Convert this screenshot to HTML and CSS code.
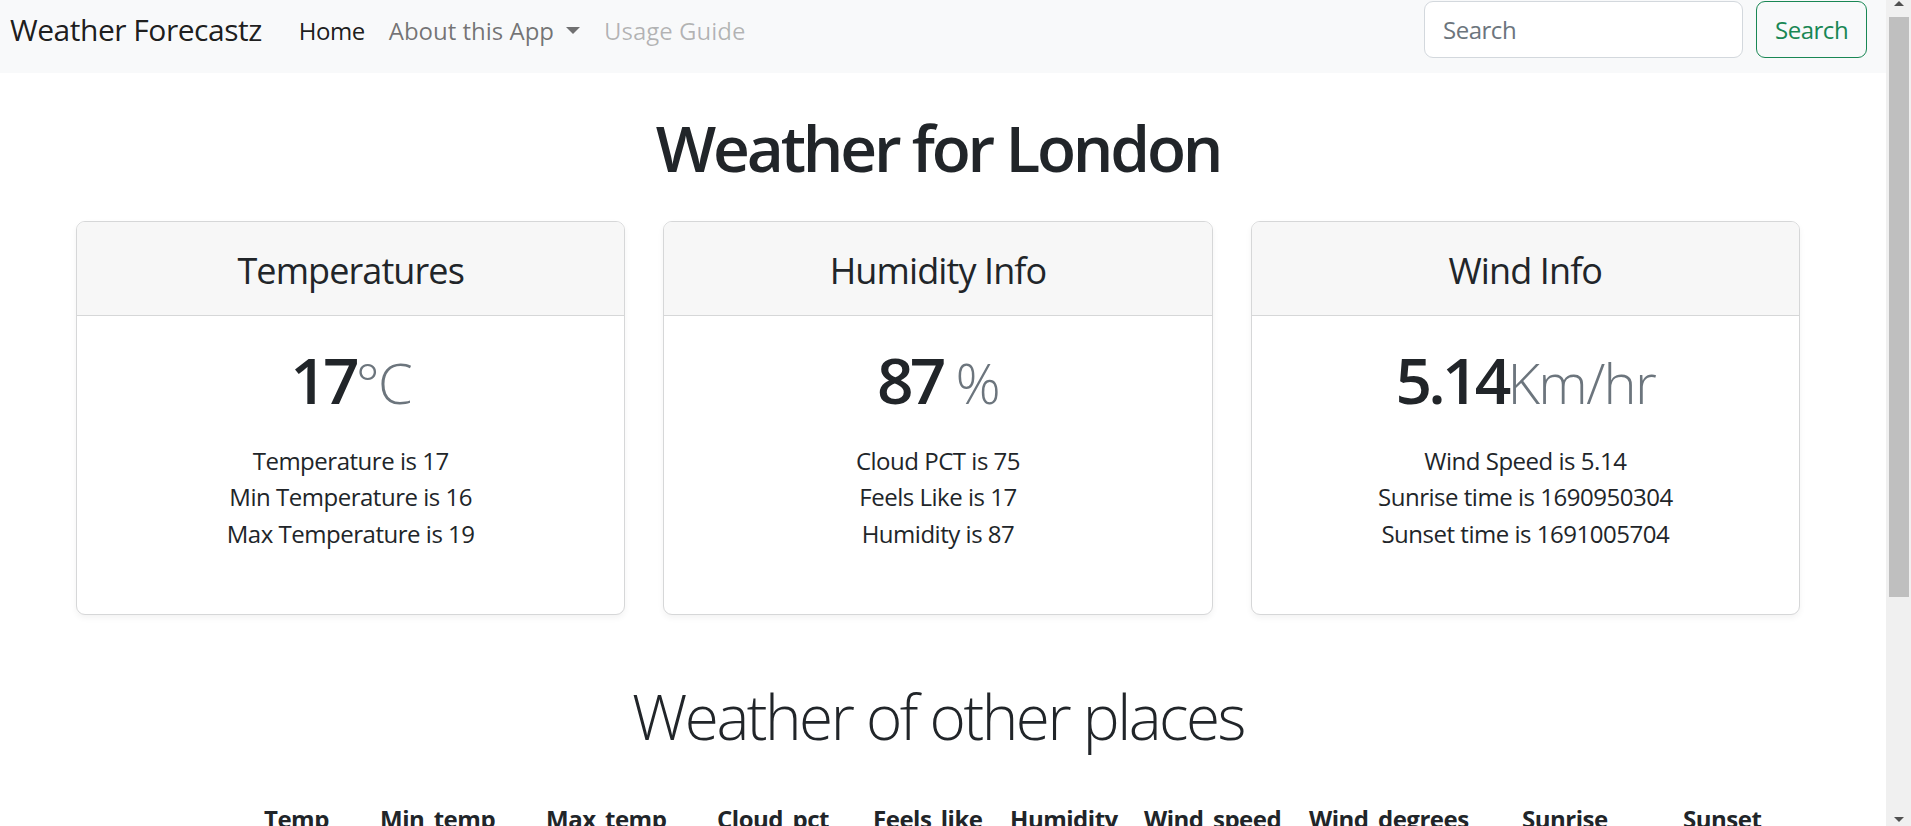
FILE: index.html
```html
<!DOCTYPE html>
<html lang="en">
<head>
<meta charset="utf-8">
<title>Weather Forecastz</title>
<link rel="stylesheet" href="styles.css">
</head>
<body>
<div class="page">
  <nav class="navbar">
    <a class="brand" href="#">Weather Forecastz</a>
    <ul class="nav">
      <li><a class="nav-link active" href="#">Home</a></li>
      <li><a class="nav-link dropdown" href="#">About this App</a></li>
      <li><a class="nav-link disabled" href="#">Usage Guide</a></li>
    </ul>
    <form class="search">
      <input class="search-input" type="search" placeholder="Search">
      <button class="search-btn" type="button">Search</button>
    </form>
  </nav>

  <main class="container">
    <h1 class="title">Weather for London</h1>

    <div class="cards">
      <div class="card">
        <div class="card-header"><h4 class="card-title">Temperatures</h4></div>
        <div class="card-body">
          <h1 class="value">17<small class="unit">°C</small></h1>
          <ul class="facts">
            <li>Temperature is 17</li>
            <li>Min Temperature is 16</li>
            <li>Max Temperature is 19</li>
          </ul>
        </div>
      </div>
      <div class="card">
        <div class="card-header"><h4 class="card-title">Humidity Info</h4></div>
        <div class="card-body">
          <h1 class="value">87 <small class="unit">%</small></h1>
          <ul class="facts">
            <li>Cloud PCT is 75</li>
            <li>Feels Like is 17</li>
            <li>Humidity is 87</li>
          </ul>
        </div>
      </div>
      <div class="card">
        <div class="card-header"><h4 class="card-title">Wind Info</h4></div>
        <div class="card-body">
          <h1 class="value">5.14<small class="unit">Km/hr</small></h1>
          <ul class="facts">
            <li>Wind Speed is 5.14</li>
            <li>Sunrise time is 1690950304</li>
            <li>Sunset time is 1691005704</li>
          </ul>
        </div>
      </div>
    </div>

    <h2 class="subtitle">Weather of other places</h2>

    <table class="places">
      <thead>
        <tr>
          <th class="c-city"></th>
          <th class="c-temp">Temp</th>
          <th class="c-min">Min_temp</th>
          <th class="c-max">Max_temp</th>
          <th class="c-cloud">Cloud_pct</th>
          <th class="c-feels">Feels_like</th>
          <th class="c-hum">Humidity</th>
          <th class="c-ws">Wind_speed</th>
          <th class="c-wd">Wind_degrees</th>
          <th class="c-rise">Sunrise</th>
          <th class="c-set">Sunset</th>
        </tr>
      </thead>
      <tbody>
        <tr>
          <td>Shanghai</td><td>28</td><td>27</td><td>30</td><td>40</td><td>31</td><td>74</td><td>4.2</td><td>120</td><td>1690924450</td><td>1690973740</td>
        </tr>
      </tbody>
    </table>
  </main>
</div>

<div class="scrollbar">
  <div class="sb-arrow sb-up"></div>
  <div class="sb-track"><div class="sb-thumb"></div></div>
  <div class="sb-arrow sb-down"></div>
</div>
</body>
</html>
```

FILE: styles.css
```css
html, body {
  margin: 0;
  padding: 0;
  overflow: hidden;
  height: 100%;
}

body {
  display: flex;
  align-items: flex-start;
  font-family: "Open Sans", "Noto Sans", sans-serif;
  font-size: 24px;
  line-height: 1.5;
  color: #212529;
  letter-spacing: -0.02em;
  background: #fff;
}

.page {
  flex: 1;
  min-width: 0;
  padding-right: 10px;
}

/* Navbar */
.navbar {
  display: flex;
  align-items: center;
  height: 57px;
  padding: 1px 19px 15px 10px;
  margin-right: -10px;
  background: #f8f9fa;
}

.brand {
  font-size: 30px;
  line-height: 45px;
  color: rgba(0, 0, 0, 0.9);
  text-decoration: none;
  margin-right: 25px;
}

.nav {
  display: flex;
  list-style: none;
  margin: 0;
  padding: 0;
}

.nav-link {
  display: block;
  padding: 2px 12px 0;
  line-height: 36px;
  text-decoration: none;
  letter-spacing: 0;
  color: rgba(0, 0, 0, 0.55);
}

.nav-link.active { color: rgba(0, 0, 0, 0.9); letter-spacing: -0.02em; }
.nav-link.disabled { color: rgba(0, 0, 0, 0.28); }

.nav-link.dropdown::after {
  content: "";
  display: inline-block;
  margin-left: 12px;
  vertical-align: 6px;
  border-top: 7px solid rgba(0, 0, 0, 0.55);
  border-left: 7px solid transparent;
  border-right: 7px solid transparent;
}

.search {
  display: flex;
  gap: 13px;
  margin-left: auto;
}

.search-input {
  box-sizing: border-box;
  width: 319px;
  height: 57px;
  padding: 9px 18px;
  border: 1px solid #d3d8dd;
  border-radius: 9px;
  font: inherit;
  letter-spacing: inherit;
  color: #212529;
  background: #fff;
  outline: none;
}

.search-input::placeholder { color: #6c757d; }

.search-btn {
  box-sizing: border-box;
  width: 111px;
  height: 57px;
  padding: 9px 18px;
  border: 1px solid #198754;
  border-radius: 9px;
  background: transparent;
  color: #198754;
  font: inherit;
  letter-spacing: inherit;
}

/* Main */
.container {
  width: 1724px;
  margin: 0 auto;
}

.title {
  margin: 37px 0 34px;
  text-align: center;
  font-size: 64px;
  line-height: 1.2;
  font-weight: 600;
  letter-spacing: -0.05em;
}

.cards {
  display: grid;
  grid-template-columns: repeat(3, 1fr);
  gap: 38px;
}

.card {
  border: 1px solid #d6d7d8;
  border-radius: 9px;
  overflow: hidden;
  box-shadow: 0 3px 6px rgba(0, 0, 0, 0.05);
  text-align: center;
  background: #fff;
}

.card-header {
  background: #f7f7f7;
  border-bottom: 1px solid #d6d7d8;
  padding: 27px 16px 23px;
}

.card-title {
  margin: 0;
  font-size: 36px;
  line-height: 1.2;
  font-weight: 400;
  letter-spacing: -0.025em;
}

.card-body {
  padding: 26px 24px 61px;
}

.value {
  margin: 0 0 24px;
  font-size: 64px;
  line-height: 1.2;
  font-weight: 600;
  letter-spacing: -0.06em;
}

.unit {
  font-size: 0.875em;
  font-weight: 300;
  letter-spacing: -0.03em;
  color: #6c757d;
}

.facts {
  list-style: none;
  margin: 0;
  padding: 0;
  line-height: 36.6px;
}

.subtitle {
  margin: 64px 0 36px;
  text-align: center;
  font-size: 62px;
  line-height: 1.2;
  font-weight: 300;
  letter-spacing: -0.04em;
}

/* Table */
.places {
  width: 100%;
  table-layout: fixed;
  border-collapse: collapse;
}

.places th,
.places td {
  padding: 12px 0;
  text-align: left;
  line-height: 36px;
  white-space: nowrap;
}

.places th { font-weight: 700; }

.c-city { width: 188px; }
.c-temp { width: 116px; }
.c-min { width: 166px; }
.c-max { width: 171px; }
.c-cloud { width: 156px; }
.c-feels { width: 137px; }
.c-hum { width: 134px; }
.c-ws { width: 165px; }
.c-wd { width: 213px; }
.c-rise { width: 161px; }

/* Fake window scrollbar */
.scrollbar {
  flex: 0 0 25px;
  height: 100vh;
  display: flex;
  flex-direction: column;
  align-items: center;
  background: #f0f0f0;
}

.sb-arrow {
  width: 0;
  height: 0;
  border-left: 5px solid transparent;
  border-right: 5px solid transparent;
}

.sb-up {
  margin-top: 1px;
  border-bottom: 5px solid #505050;
}

.sb-down {
  margin-bottom: 4px;
  border-top: 5px solid #505050;
}

.sb-track {
  flex: 1;
  align-self: stretch;
  padding: 11px 2px 0 3px;
}

.sb-thumb {
  height: 580px;
  background: #bfbfbf;
}
```
